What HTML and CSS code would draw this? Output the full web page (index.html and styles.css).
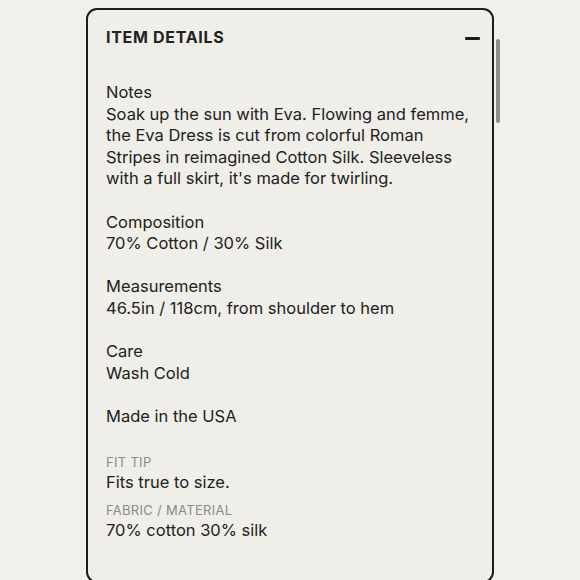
FILE: index.html
```html
<!DOCTYPE html>
<html lang="en">
<head>
<meta charset="utf-8">
<title>Item Details</title>
<link rel="stylesheet" href="styles.css">
</head>
<body>
<div class="frame">
  <section class="card">
    <header class="card-head">
      <h2 class="card-title">ITEM DETAILS</h2>
      <span class="collapse" aria-label="Collapse"></span>
    </header>
    <div class="card-body">
      <p class="desc">Notes<br>Soak up the sun with Eva. Flowing and femme, the Eva Dress is cut from colorful Roman Stripes in reimagined Cotton Silk. Sleeveless with a full skirt, it's made for twirling.<br><br>Composition<br>70% Cotton / 30% Silk<br><br>Measurements<br>46.5in / 118cm, from shoulder to hem<br><br>Care<br>Wash Cold<br><br>Made in the USA</p>
      <dl class="facts">
        <div class="fact">
          <dt class="fact-label">FIT TIP</dt>
          <dd class="fact-value">Fits true to size.</dd>
        </div>
        <div class="fact">
          <dt class="fact-label">FABRIC / MATERIAL</dt>
          <dd class="fact-value">70% cotton 30% silk</dd>
        </div>
      </dl>
    </div>
  </section>
  <div class="scroll-thumb"></div>
</div>
</body>
</html>
```
FILE: styles.css
```css
html, body {
  margin: 0;
  padding: 0;
}
body {
  background: #f1f0eb;
  font-family: Inter, "Liberation Sans", sans-serif;
  color: #222220;
  height: 580px;
  overflow: hidden;
}
.frame {
  display: flex;
  align-items: flex-start;
  gap: 2px;
  padding: 8px 0 0 86px;
}
.card {
  box-sizing: border-box;
  width: 408px;
  height: 575px;
  border: 2px solid #1c1c1a;
  border-radius: 11px;
  background: #efeee8;
}
.card-head {
  display: flex;
  align-items: center;
  justify-content: space-between;
  padding: 17px 12px 0 18px;
  height: 20px;
}
.card-title {
  margin: 0;
  font-size: 16px;
  line-height: 20px;
  font-weight: 700;
  letter-spacing: 0.7px;
}
.collapse {
  width: 15px;
  height: 3px;
  border-radius: 1px;
  background: #1c1c1a;
  margin-top: 2px;
}
.card-body {
  padding: 35px 18px 0 18px;
}
.desc {
  margin: 0;
  font-size: 16.5px;
  line-height: 21.6px;
}
.facts {
  margin: 26px 0 0 0;
  display: flex;
  flex-direction: column;
  gap: 9px;
}
.fact-label {
  font-size: 13px;
  line-height: 16px;
  letter-spacing: 0.3px;
  color: #8b8b88;
  margin-bottom: 2px;
}
.fact-value {
  margin: 0;
  font-size: 16.5px;
  line-height: 21.6px;
}
.scroll-thumb {
  width: 4px;
  height: 84px;
  margin-top: 31px;
  border-radius: 2px;
  background: #8c8c89;
}
```
